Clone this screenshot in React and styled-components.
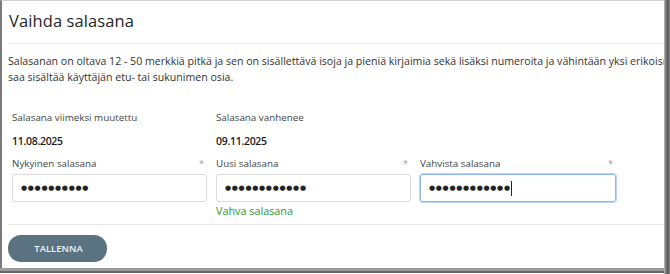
import React from "react";
import styled, { createGlobalStyle } from "styled-components";

const Global = createGlobalStyle`
  html, body { margin: 0; padding: 0; background: #fff; }
  body { width: 670px; height: 274px; overflow: hidden; font-family: "Open Sans", "Liberation Sans", sans-serif; }
`;

const Frame = styled.div`
  width: 670px;
  height: 274px;
  box-sizing: border-box;
  padding: 0 6px 6px 0;
  background: linear-gradient(to right, #fff 0, #fff 663px, #bbb 664px, #777 666px, #555 668px, #888 670px);
`;

const Window = styled.div`
  width: 664px;
  height: 268px;
  box-sizing: border-box;
  background: #fff;
  border-left: 2px solid #7a7a7a;
  border-top: 1px solid #d0d0d0;
  box-shadow: 0 3px 0 #9a9a9a, 0 5px 0 #666;
  overflow: hidden;
  position: relative;
`;

const Page = styled.div`
  width: 760px;
  padding: 0 0 0 6px;
`;

const Title = styled.h1`
  margin: 0;
  padding: 8px 0 0 1px;
  height: 42px;
  box-sizing: border-box;
  font-size: 16.5px;
  font-weight: 400;
  color: #262626;
  letter-spacing: 0.1px;
`;

const Divider = styled.hr`
  margin: 0;
  border: none;
  border-top: 1px solid #e6e6e6;
  width: 660px;
`;

const Desc = styled.div`
  padding: 9px 0 0 0;
  font-size: 10.6px;
  line-height: 16px;
  color: #333;
  height: 67px;
  box-sizing: border-box;
`;

const Line = styled.div`
  white-space: nowrap;
`;

const Grid = styled.div`
  display: grid;
  grid-template-columns: 195px 195px 196px;
  column-gap: 9px;
  padding-left: 4px;
`;

const InfoLabel = styled.div`
  font-size: 9.8px;
  color: #444;
  height: 23px;
  line-height: 14px;
`;

const InfoValue = styled.div`
  font-size: 10.5px;
  font-weight: 600;
  color: #1a1a1a;
  letter-spacing: -0.3px;
  height: 23px;
  line-height: 14px;
`;

const FieldHead = styled.div`
  display: flex;
  justify-content: space-between;
  font-size: 9.8px;
  color: #444;
  height: 13px;
  line-height: 13px;
  padding-right: 3px;
  margin-bottom: 4px;
`;

const Star = styled.span`
  color: #999;
  font-size: 9px;
`;

const Input = styled.div`
  height: 28px;
  box-sizing: border-box;
  border: 1px solid ${p => (p.$focused ? "#8fb7f2" : "#dcdcdc")};
  box-shadow: ${p => (p.$focused ? "0 0 0 1px #b9d3f8" : "none")};
  border-radius: 3px;
  display: flex;
  align-items: center;
  padding-left: 8px;
  font-size: 7px;
  letter-spacing: 0.7px;
  color: #222;
  font-family: "DejaVu Sans", sans-serif;
`;

const Caret = styled.span`
  display: inline-block;
  width: 1px;
  height: 15px;
  background: #222;
  margin-left: 0;
`;

const Hint = styled.div`
  font-size: 10.8px;
  color: #2a9a2a;
  padding-top: 2px;
  height: 22px;
  box-sizing: border-box;
  line-height: 14px;
`;

const Footer = styled.div`
  padding-top: 10px;
`;

const Button = styled.button`
  width: 99px;
  height: 27px;
  border: none;
  border-radius: 13px;
  background: #5b7380;
  color: #eef2f5;
  font-family: "Open Sans", "Liberation Sans", sans-serif;
  font-size: 9.5px;
  font-weight: 600;
  letter-spacing: 0;
  padding: 0 0 0 2px;
  cursor: pointer;
`;

const Field = ({ label, dots, focused, hint }) => (
  <div>
    <FieldHead>
      <span>{label}</span>
      <Star>*</Star>
    </FieldHead>
    <Input $focused={focused}>
      {"●".repeat(dots)}
      {focused && <Caret />}
    </Input>
    <Hint>{hint}</Hint>
  </div>
);

export default function App() {
  return (
    <>
      <Global />
      <Frame>
        <Window>
          <Page>
            <Title>Vaihda salasana</Title>
            <Divider />
            <Desc>
              <Line>
                Salasanan on oltava 12 - 50 merkkiä pitkä ja sen on sisällettävä isoja ja pieniä kirjaimia sekä lisäksi numeroita ja vähintään yksi erikoismerkki. Salasana ei
              </Line>
              <Line>saa sisältää käyttäjän etu- tai sukunimen osia.</Line>
            </Desc>
            <Grid>
              <InfoLabel>Salasana viimeksi muutettu</InfoLabel>
              <InfoLabel>Salasana vanhenee</InfoLabel>
              <div />
              <InfoValue>11.08.2025</InfoValue>
              <InfoValue>09.11.2025</InfoValue>
              <div />
              <Field label="Nykyinen salasana" dots={10} />
              <Field label="Uusi salasana" dots={12} hint="Vahva salasana" />
              <Field label="Vahvista salasana" dots={12} focused />
            </Grid>
            <Divider />
            <Footer>
              <Button>TALLENNA</Button>
            </Footer>
          </Page>
        </Window>
      </Frame>
    </>
  );
}
